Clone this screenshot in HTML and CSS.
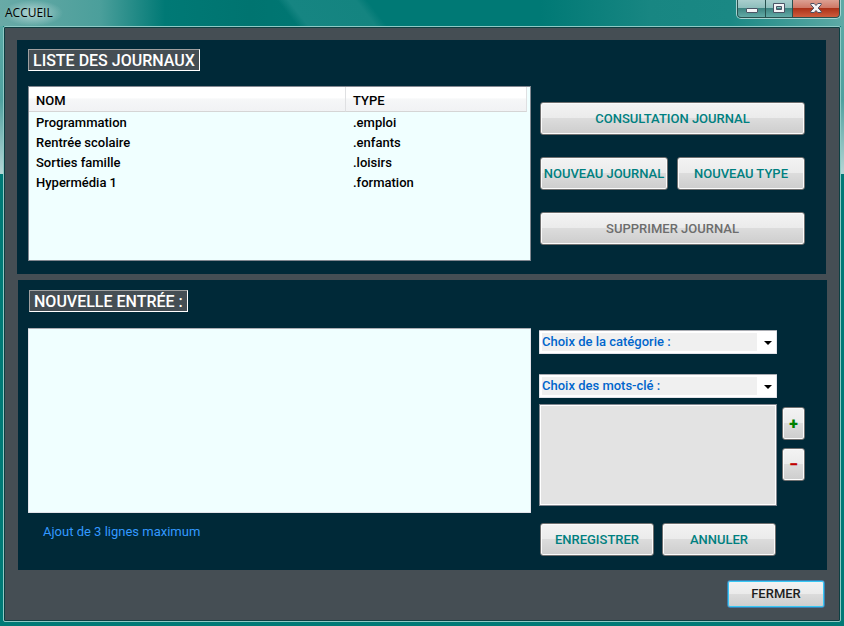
FILE: index.html
```html
<!DOCTYPE html>
<html lang="fr">
<head>
<meta charset="utf-8">
<title>ACCUEIL</title>
<link rel="stylesheet" href="styles.css">
</head>
<body>
<div class="window">
  <header class="titlebar">
    <h1 class="title">ACCUEIL</h1>
    <div class="controls">
      <button class="control" type="button" aria-label="Réduire">
        <svg width="12" height="6" viewBox="0 0 12 6"><rect x=".5" y=".5" width="11" height="4" rx=".5" fill="#f4f4f6" stroke="#4b5566"/></svg>
      </button>
      <button class="control control-max" type="button" aria-label="Agrandir">
        <svg width="12" height="11" viewBox="0 0 12 11"><path fill="#f4f4f6" stroke="#4b5566" fill-rule="evenodd" d="M.5.5h11v9H.5zM3.500 3.500v3h5v-3z"/></svg>
      </button>
      <button class="control control-close" type="button" aria-label="Fermer la fenêtre">
        <svg width="12" height="11" viewBox="0 0 12 11"><path fill="#f4f4f6" stroke="#4b4f62" d="M.8.5h3.400L6 2.500 7.800.5h3.400v1.200L8.200 5l3 3.300v1.200H7.800L6 7.500 4.200 9.500H.8V8.300l3-3.300-3-3.300z"/></svg>
      </button>
    </div>
  </header>
  <main class="client">
    <section class="panel panel-list">
      <h2 class="heading">LISTE DES JOURNAUX</h2>
      <div class="columns">
        <div class="list">
          <table class="journals">
            <thead><tr><th scope="col">NOM</th><th class="type" scope="col">TYPE</th></tr></thead>
            <tbody>
              <tr><td>Programmation</td><td>.emploi</td></tr>
              <tr><td>Rentrée scolaire</td><td>.enfants</td></tr>
              <tr><td>Sorties famille</td><td>.loisirs</td></tr>
              <tr><td>Hypermédia 1</td><td>.formation</td></tr>
            </tbody>
          </table>
        </div>
        <div class="actions">
          <button class="btn" type="button">CONSULTATION JOURNAL</button>
          <div class="pair">
            <button class="btn" type="button">NOUVEAU JOURNAL</button>
            <button class="btn" type="button">NOUVEAU TYPE</button>
          </div>
          <button class="btn" type="button" disabled>SUPPRIMER JOURNAL</button>
        </div>
      </div>
    </section>
    <section class="panel panel-entry">
      <h2 class="heading"><label for="entry">NOUVELLE ENTRÉE :</label></h2>
      <div class="columns">
        <div>
          <textarea class="entry" id="entry"></textarea>
          <p class="hint">Ajout de 3 lignes maximum</p>
        </div>
        <div class="fields">
          <div class="combo">
            <select aria-label="Catégorie"><option>Choix de la catégorie :</option></select>
            <svg class="arrow" width="8" height="4" viewBox="0 0 8 4"><path d="M0 0h8L4 4z"/></svg>
          </div>
          <div class="combo">
            <select aria-label="Mots-clé"><option>Choix des mots-clé :</option></select>
            <svg class="arrow" width="8" height="4" viewBox="0 0 8 4"><path d="M0 0h8L4 4z"/></svg>
          </div>
          <div class="keywords">
            <select class="keyword-list" multiple aria-label="Mots-clé choisis"></select>
            <div class="keyword-buttons">
              <button class="btn plus" type="button">+</button>
              <button class="btn minus" type="button">−</button>
            </div>
          </div>
          <div class="submit">
            <button class="btn" type="button">ENREGISTRER</button>
            <button class="btn" type="button">ANNULER</button>
          </div>
        </div>
      </div>
    </section>
    <footer class="footer"><button class="btn close" type="button">FERMER</button></footer>
  </main>
</div>
</body>
</html>
```
FILE: styles.css
```css
* { box-sizing: border-box; }

body {
  margin: 0;
  background: #007a76;
  color: #000;
  font: 500 13px/20px Roboto, "Liberation Sans", sans-serif;
}

h1, h2, p { margin: 0; }
button, select, textarea { font: inherit; margin: 0; }
svg { display: block; }

.window {
  min-height: 100vh;
  display: flex;
  flex-direction: column;
  padding: 0 3px 4px;
  background:
    linear-gradient(#5aa9a5, #4fa19f 50%, #b5d6d5) 0 26px / 3px 148px no-repeat,
    linear-gradient(#5aa9a5, #4fa19f 50%, #b5d6d5) 100% 26px / 3px 148px no-repeat,
    linear-gradient(52deg, transparent 34%, #168582 38%, #148480 62%, transparent 66%) 202px 0 / 260px 26px no-repeat,
    linear-gradient(90deg, #69aaa7 0, #4b9f9b 100px, #007975 165px, #007470 250px, #007975 350px, #007975 540px, #188682 650px, #1a8884 730px, #5eaaa6 100%) 0 0 / 100% 26px no-repeat,
    #007a76;
}

.titlebar {
  height: 26px;
  display: flex;
  justify-content: space-between;
  align-items: flex-start;
}

.title {
  padding: 3px 10px 3px 2px;
  font: 400 12px/20px "Open Sans", sans-serif;
  background: radial-gradient(closest-side, rgba(225, 240, 239, .65), transparent);
}

.controls {
  display: flex;
  height: 19px;
  border: 1px solid #a8d4d1;
  border-top: 0;
  border-radius: 0 0 5px 5px;
  overflow: hidden;
}

.control {
  width: 29px;
  padding: 0;
  display: flex;
  align-items: center;
  justify-content: center;
  border: 1px solid #28514f;
  border-top: 0;
  border-radius: 0 0 0 4px;
  background: linear-gradient(#a9cecd 0, #8fbfbd 45%, #3f8582 50%, #62aaa6 100%);
}

.control:first-child { padding-top: 4px; }
.control-max { width: 27px; border-left: 0; border-radius: 0; }
.control-close {
  width: 47px;
  border-left: 0;
  border-radius: 0 0 4px;
  background: linear-gradient(#dca092 0, #cf7967 45%, #ac3219 50%, #ce5c3d 100%);
}

.client {
  flex: 1;
  border: 1px solid #8fcac5;
  border-radius: 2px;
  box-shadow: inset 0 0 0 1px #0d3f42;
  padding: 13px 14px 13px 13px;
  background: #454e54;
}

.panel { background: #002938; }
.panel-list { padding: 9px 21px 13px 11px; }
.panel-entry { margin: 6px -1px 0 1px; padding: 10px 22px 14px 10px; }

.heading {
  width: fit-content;
  height: 22px;
  padding: 0 4px;
  border: 1px solid #fff;
  border-top-color: #a0a0a0;
  border-left-color: #a0a0a0;
  background: #454e54;
  color: #fff;
  font: 500 16px/21px Roboto, sans-serif;
}

.columns {
  display: grid;
  grid-template-columns: 1fr 265px;
  column-gap: 9px;
  margin-top: 15px;
}

.list {
  height: 175px;
  padding: 0 3px 0 0;
  border: 1px solid #828790;
  background: #f0ffff;
}

.journals {
  width: 100%;
  border-collapse: separate;
  border-spacing: 0;
  table-layout: fixed;
}

.journals th, .journals td {
  height: 20px;
  padding: 2px 7px 0;
  line-height: 18px;
  text-align: left;
  font-weight: 500;
}

.journals th {
  height: 25px;
  padding-top: 3px;
  border-bottom: 1px solid #d5d5d5;
  border-right: 1px solid #dfe0e2;
  background: linear-gradient(#fff 45%, #f6f7f8 50%, #f1f2f4);
}

.journals .type { width: 181px; }

.actions {
  display: flex;
  flex-direction: column;
  padding-top: 16px;
  gap: 22px;
}

.btn {
  width: 100%;
  height: 33px;
  padding: 0;
  border: 1px solid #707070;
  border-radius: 3px;
  box-shadow: inset 0 0 0 1px #fbfbfb;
  background: linear-gradient(#f3f3f3, #ebebeb 49%, #dcdcdc 50%, #cdcdcd);
  color: #008080;
  white-space: nowrap;
}

.btn:disabled { color: #6d6d6d; }
.pair, .submit { display: flex; gap: 9px; }

.panel-entry .heading { margin-left: 1px; }
.panel-entry .columns {
  grid-template-columns: 1fr 266px;
  column-gap: 8px;
  margin-top: 16px;
}

.entry {
  display: block;
  width: 100%;
  height: 185px;
  border: 1px solid #e2e3ea;
  border-top-color: #abadb3;
  border-radius: 1px;
  background: #f0ffff;
  resize: none;
}

.hint {
  margin: 9px 0 0 15px;
  color: #3399ff;
  font-weight: 400;
}

.fields { padding-top: 2px; }
.combo {
  position: relative;
  height: 24px;
  margin: 0 28px 20px 0;
}

.combo select {
  appearance: none;
  display: block;
  width: 100%;
  height: 24px;
  padding: 0 24px 0 2px;
  border: 1px solid #e2e3ea;
  border-top-color: #abadb3;
  border-radius: 1px;
  background:
    linear-gradient(#f0f0f0, #f0f0f0) 2px 2px / calc(100% - 21px) 18px no-repeat,
    #fff;
  color: #0066cc;
}

.arrow {
  position: absolute;
  right: 5px;
  top: 11px;
}

.keywords {
  display: flex;
  gap: 5px;
  margin-top: -14px;
}

.keyword-list {
  flex: 1;
  height: 102px;
  border: 1px solid #828790;
  border-radius: 0;
  box-shadow: inset 0 0 0 1px #fff;
  background: #e3e3e3;
}

.keyword-buttons {
  width: 23px;
  display: flex;
  flex-direction: column;
  gap: 8px;
  padding-top: 3px;
}

.plus, .minus { font-size: 16px; font-weight: 900; }
.plus { color: #008000; }
.minus { color: #c00000; }

.submit {
  gap: 8px;
  margin: 17px 29px 0 1px;
}

.footer {
  display: flex;
  justify-content: flex-end;
  padding: 10px 1px 0 0;
}

.close {
  width: 98px;
  height: 28px;
  border-color: #3c7fb1;
  box-shadow: inset 0 0 0 1px #38c8f4;
  color: #1e1e1e;
}
```
